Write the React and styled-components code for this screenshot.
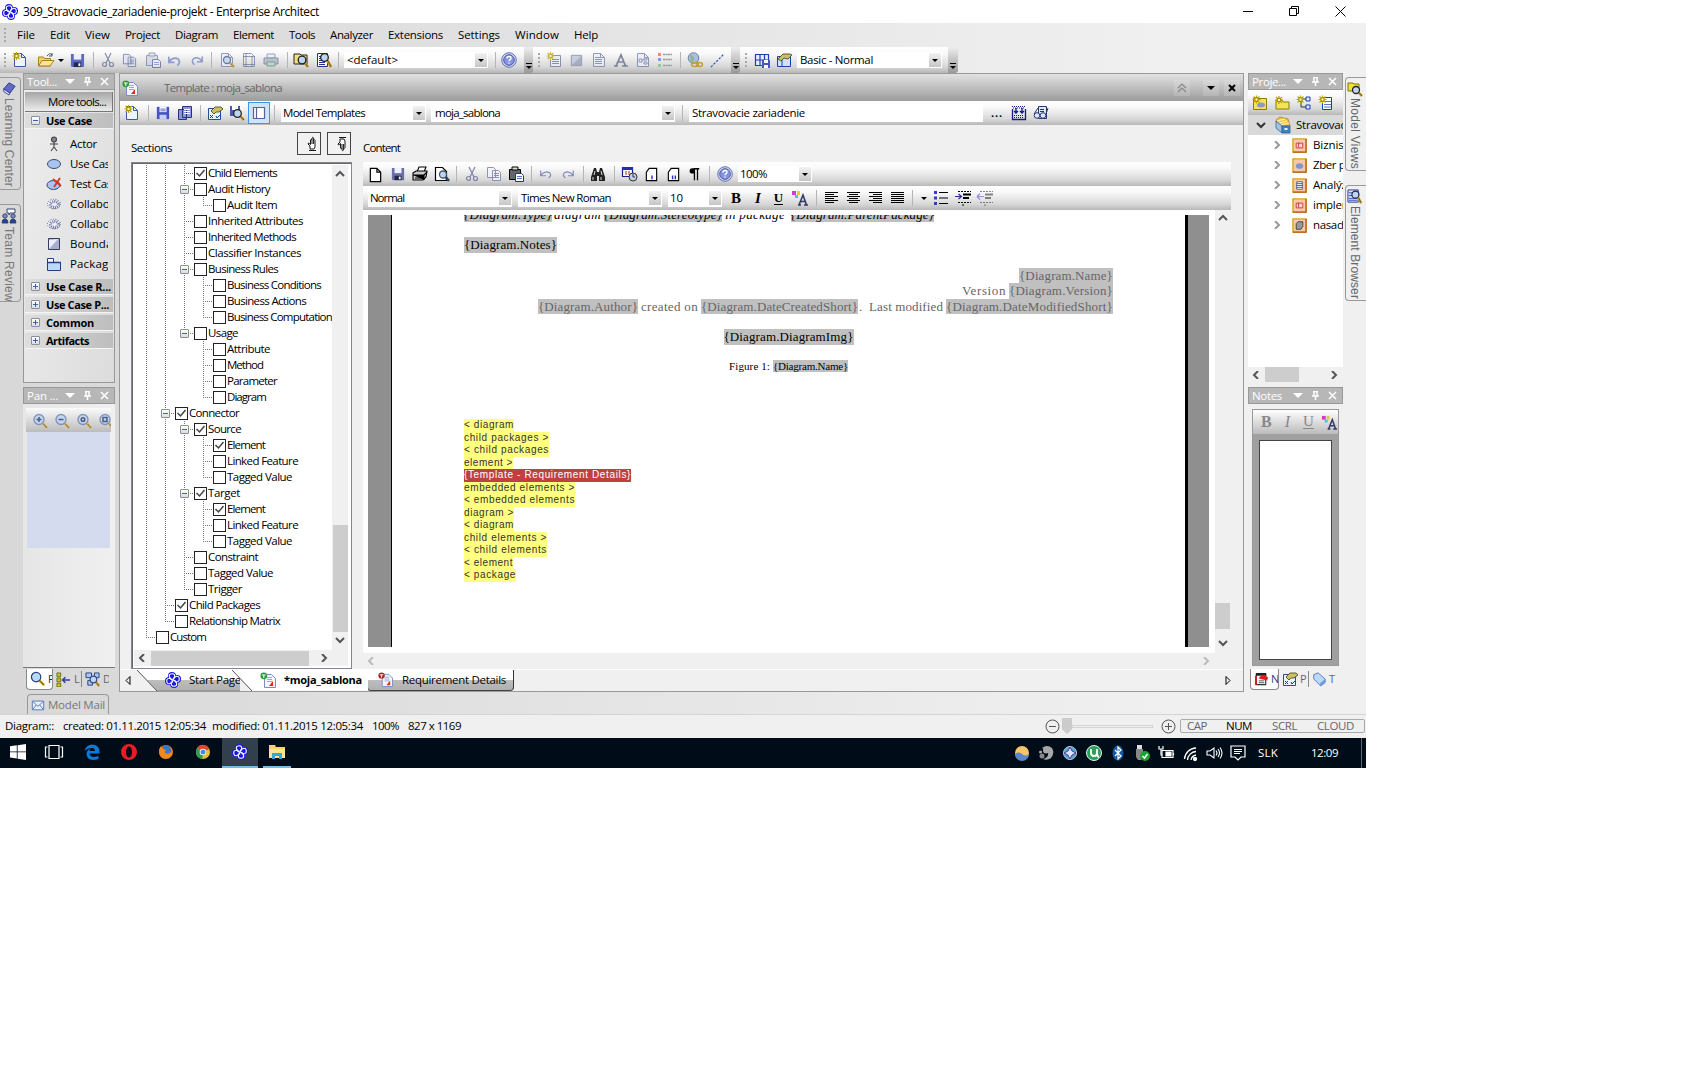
import React, { useLayoutEffect, useRef } from "react";
import styled, { createGlobalStyle, css } from "styled-components";

const UI = '"Open Sans", "Noto Sans", sans-serif';
const bar = "linear-gradient(180deg,#ffffff 0%,#f9f9f9 25%,#d8d8d8 75%,#b8b8b8 100%)";

const Global = createGlobalStyle`
  * { box-sizing: border-box; }
  html, body { margin: 0; background: #fff; }
  body { font: 12px/16px ${UI}; color: #000; overflow: hidden; }
  svg { display: block; flex: none; }
`;

/* ---------- text ---------- */
const Label = styled.span`
  flex: none;
  display: inline-block;
  white-space: pre;
  margin-left: ${(p) => p.$ml || 0}px;
  font-family: ${(p) => p.$font || UI};
  font-size: ${(p) => p.$size || (p.$bold ? 11 : 11.5)}px;
  font-weight: ${(p) => (p.$bold ? 700 : 400)};
  font-style: ${(p) => (p.$italic ? "italic" : "normal")};
  color: ${(p) => p.$color || "#000"};
  background: ${(p) => p.$bg || "none"};
  ${(p) => p.$vertical && css`writing-mode: vertical-rl; line-height: 14px;`}
`;

// Spreads the letters so that a label takes up exactly w pixels.
function Text({ w, children, ml, size, bold, italic, color, bg, font, vertical }) {
  const ref = useRef(null);
  useLayoutEffect(() => {
    if (!w) return;
    const el = ref.current;
    el.style.letterSpacing = "0px";
    const box = el.getBoundingClientRect();
    const natural = vertical ? box.height : box.width;
    el.style.letterSpacing = `${(w - natural) / children.length}px`;
  }, [w, children, vertical]);
  return (
    <Label ref={ref} $ml={ml} $size={size} $bold={bold} $italic={italic} $color={color} $bg={bg} $font={font} $vertical={vertical}>
      {children}
    </Label>
  );
}

/* ---------- icons ---------- */
const Star = ({ x = 5, y = 5 }) => (
  <g stroke="#c9a800" strokeWidth="1.2">
    <path d={`M${x - 4} ${y}h8M${x} ${y - 4}v8M${x - 3} ${y - 3}l6 6M${x + 3} ${y - 3}l-6 6`} />
    <circle cx={x} cy={y} r="1.8" fill="#fffbb0" stroke="#a89000" />
  </g>
);
const Lens = ({ x = 6, y = 6, r = 4, c = "#3b4d80", h = "#c79a2e" }) => (
  <g fill="none">
    <path d={`M${x + r * 0.7} ${y + r * 0.7}L15 15`} stroke={h} strokeWidth="2.6" />
    <path d={`M${x + r * 0.7 + 1} ${y + r * 0.7 + 1}L15 15`} stroke="#5d4a1c" strokeWidth=".8" />
    <circle cx={x} cy={y} r={r} fill="#bcd6f5" stroke={c} strokeWidth="1.3" />
  </g>
);
const Knot = () => (
  <g>
    <g fill="#1a18e8"><circle cx="7" cy="4" r="4" /><circle cx="12" cy="7" r="4" /><circle cx="9" cy="12" r="4" /><circle cx="4" cy="9" r="4" /></g>
    <g fill="none" stroke="#fff" strokeWidth="1.1">
      <path d="M9.500 6.500Q10.500 1.500 7 1.700 3.500 2 4.500 5T8 8" />
      <path d="M9.500 9.500Q14.500 10.500 14.300 7 14 3.500 11 4.500T8 8" />
      <path d="M6.500 9.500Q5.500 14.500 9 14.300 12.500 14 11.500 11T8 8" />
      <path d="M6.500 6.500Q1.500 5.500 1.700 9 2 12.500 5 11.500T8 8" />
    </g>
  </g>
);
const pageShape = (f, s) => <path d="M2.5 1.5h7l4 4v9h-11zM9.5 1.5v4h4" fill={f} stroke={s} />;
const lines = (ys, x1, x2, c) => <path d={ys.map((y) => `M${x1} ${y}H${x2}`).join("")} stroke={c} />;
const diskette = (c) => (
  <g><path d="M1 1h14v14H2l-1-1z" fill={c} /><path d="M4 1h8v6H4z" fill="#eef0fb" /><path d="M4 10h8v5H4z" fill="#23264f" /><path d="M9 11h2v3H9z" fill="#fff" /></g>
);
const scissors = (c) => (
  <g fill="none" stroke={c} strokeWidth="1.2"><path d="M5 1l5 10M11 1L6 11" /><circle cx="4.5" cy="12.5" r="2" /><circle cx="11.5" cy="12.5" r="2" /></g>
);
const copyShape = (c, f) => (
  <g stroke={c} fill={f}><path d="M1.5 1.5h6l2 2v8h-8zM6.5 4.5h6l2 2v8h-8z" />{lines([7.5, 9.5, 11.5], 8, 13, c)}</g>
);
const pasteShape = (b, f, c) => (
  <g><path d="M1.5 3.5h11v10h-11z" fill={b} stroke={c} /><path d="M4 1h6v3H4z" fill="#ddd" stroke={c} /><path d="M7.5 7.5h6l2 2v6h-8z" fill={f} stroke="#24348c" />{lines([10.5, 12.5], 9, 14, "#5d74c8")}</g>
);
const wiz = (
  <g><path d="M1.5 3.5h12v11h-12z" fill="#eaf2ff" stroke="#234c9a" /><path d="M4 6l4-4 6 0 2 2-4 3-3 0-2 2z" fill="#cdbf62" stroke="#3f3c14" strokeWidth=".8" /><path d="M3 10l3 3M6 10l-3 3M9 11l1 2 3-3" stroke="#17398e" fill="none" /></g>
);
const docBadge = (badge) => (
  <g><path d="M4.5 2.5h7l4 4v9h-11z" fill="#f4f6ff" stroke="#7d8ac8" />{lines([5.5, 7.5, 9.5], 7, 12, "#9aa6da")}<path d="M9 14l4-5v5z" fill="#e02a1c" /><circle cx="3.8" cy="3.8" r="3.4" fill={badge} /><path d="M2 3h3.6M3.8 3v3" stroke="#fff" /></g>
);
const zoomLens = (inner) => (
  <g opacity=".85"><Lens x={7} y={6.5} r={5} c="#6f87b5" h="#d8b04a" /><g stroke="#37466e" strokeWidth="1.5" fill="none">{inner}</g></g>
);
const folderPkg = (inner) => (
  <g><path d="M1 1h14v14H1z" fill="#f6c9a8" stroke="#d8a018" strokeWidth="1.4" /><path d="M15 1v14H1" fill="none" stroke="#b4581a" strokeWidth="1.3" />{inner}</g>
);
const alignLines = (ws) => <path d={ws.map(([a, b], i) => `M${a} ${2.5 + i * 2}H${b}`).join("")} stroke="#000" />;

const art = {
  knot: <Knot />,
  newdoc: <g>{pageShape("#eef3ff", "#3d59a0")}<Star x={4.5} y={4} /></g>,
  open: <g><path d="M.5 14V5h5l1 1.500h6V14z" fill="#f1cf6a" stroke="#a8821e" /><path d="M.5 14L4 8.500h12L12 14z" fill="#fbe39a" stroke="#a8821e" /><path d="M9 4q3-4 5-1m0-2v3h-3" fill="none" stroke="#456" /></g>,
  save: diskette("#5d68c4"),
  cut: <g opacity=".65">{scissors("#4a588c")}</g>,
  copy: <g opacity=".65">{copyShape("#4a588c", "#dfe4f6")}</g>,
  paste: <g opacity=".55">{pasteShape("#c9cfe4", "#eef", "#4a588c")}</g>,
  undo: <path d="M2 4v6h6M2 9.500q5-6 10-3 3 3-1 7" fill="none" stroke="#8f9ccb" strokeWidth="1.8" />,
  redo: <path d="M14 4v6H8M14 9.500q-5-6-10-3-3 3 1 7" fill="none" stroke="#8f9ccb" strokeWidth="1.8" />,
  preview: <g opacity=".7">{pageShape("#eef", "#67759f")}<Lens x={8} y={8} r={3.5} /></g>,
  page: <g opacity=".7" fill="none" stroke="#67759f"><path d="M2.500 1.500h8l3 3v10h-11zM5 1v14M11 4v11M2 4.500h12M2 12.500h12" /></g>,
  print: <g opacity=".75"><path d="M4 2h8v4H4z" fill="#e8eefb" stroke="#7b89a5" /><path d="M1 6h14v6H1z" fill="#a8b2c4" stroke="#6b7890" /><path d="M4 10h8v4H4z" fill="#9fe3b0" stroke="#6b7890" /></g>,
  find: <g><path d="M1 2h6l1 1h6v9H1z" fill="#f6df7a" stroke="#222" /><Lens x={9} y={8} r={3.800} c="#222" /></g>,
  find2: <g><path d="M1.500 1.500h10v13h-10z" fill="#fff" stroke="#24348c" />{lines([4.5, 6.5, 8.5, 10.5, 12.5], 3, 9, "#24348c")}<Lens x={8.500} y={5.500} r={3.800} c="#222" /></g>,
  help: <g><circle cx="8" cy="8" r="7.300" fill="#cfd6f2" stroke="#6476b4" /><circle cx="8" cy="8" r="5.300" fill="#8594dc" stroke="#4c5ea8" /><path d="M6 6.500q0-2 2-2t2 1.700q0 1-1.200 1.600-.8.400-.8 1.400M8 10.500v1.300" fill="none" stroke="#fff" strokeWidth="1.300" /></g>,
  newel: <g opacity=".75"><path d="M4.500 3.500h10v11h-10z" fill="#eef" stroke="#67759f" />{lines([7.5, 9.5, 11.5], 6, 13, "#67759f")}<Star x={4.500} y={4} /></g>,
  shade: <g opacity=".7"><path d="M2.500 2.500h11v11h-11z" fill="#bcc2d6" stroke="#67759f" /><path d="M3 13L13 3v10z" fill="#8f98b4" /></g>,
  doc: <g opacity=".7">{pageShape("#eef", "#67759f")}{lines([5.5, 7.5, 9.5, 11.5], 4, 11, "#67759f")}</g>,
  bigA: <path d="M1 14h4M9 14h6M3 14L8 3l4.500 11M5 10h5" fill="none" stroke="#7d8398" strokeWidth="1.700" />,
  docT: <g opacity=".7">{pageShape("#eef", "#67759f")}<path d="M4 7h3v3H4zM9 6h3v2H9zM9 10h3v2H9zM7 8h2" fill="none" stroke="#67759f" /></g>,
  legend: <g><path d="M1 1h3v3H1z" fill="#f08a7a" /><path d="M1 6h3v3H1z" fill="#7d9be8" /><path d="M1 12h3v3H1z" fill="#8ecf8e" /><path d="M6 2.500h9M6 7.500h9M6 13.500h9" stroke="#999" strokeWidth="1.500" strokeDasharray="2 .5" /></g>,
  globe: <g><circle cx="6.500" cy="6" r="5.300" fill="#a9bfdc" stroke="#6d86a8" /><path d="M3 3q3 0 4 3t-3 4" fill="#8db48c" /><ellipse cx="8" cy="12.500" rx="3.500" ry="2" fill="none" stroke="#c79a3e" strokeWidth="1.500" /><ellipse cx="12.500" cy="12.500" rx="3" ry="2" fill="none" stroke="#c79a3e" strokeWidth="1.500" /></g>,
  dash: <path d="M1 15L15 1" stroke="#3c57b4" strokeWidth="1.300" strokeDasharray="2.500 1.500" />,
  gridSave: <g><path d="M1.500 2.500h13v11h-13zM6 2v11M10.500 2v6M1 8h13" fill="#e5f0ff" stroke="#1c3fae" strokeWidth="1.200" /><path d="M8 8h8v8H8z" fill="#4a55b8" /><path d="M10 8h4v3h-4zM10 13h4v3h-4z" fill="#fff" /></g>,
  gridHand: <g><path d="M1.500 4.500h13v10h-13zM6 4v10" fill="#cfe2fb" stroke="#1c3fae" /><path d="M2 7l5-5h7l2 1-4 4-4-1-3 3z" fill="#cdbf62" stroke="#3f3c14" strokeWidth=".8" /></g>,
  tplSaveAll: <g><path d="M1.500 4.500h8v10h-8zM5.500 1.500h9v11h-9z" fill="#8c96dc" stroke="#27337e" />{lines([4.5, 6.5, 8.5], 7, 13, "#fff")}</g>,
  tplSave: <g><path d="M1 1h14v14H1z" fill="#4453c0" /><path d="M4 1h8v6H4z" fill="#fff" />{lines([3.5, 5.5], 5, 11, "#4453c0")}<path d="M4 10h8v5H4z" fill="#c7cdf4" /></g>,
  wiz,
  diskLens: <g><path d="M1 1h10v10H1z" fill="#4858b4" /><path d="M3 1h6v4H3z" fill="#fff" /><Lens x={8.500} y={8.500} r={3.800} c="#222" /></g>,
  layout: <path d="M2.500 2.500h11v11h-11zM5.500 2v12" fill="#fff" stroke="#5a5f9c" strokeWidth="1.200" />,
  generate: <g fill="none" stroke="#121a8c"><path d="M1.500 4v10.500h13V4" strokeWidth="1.300" /><path d="M5 3v5m-2-2l2 2 2-2M11 3v5m-2-2l2 2 2-2" strokeWidth="1.400" /><path d="M3 10.500h10M3 12.500h10" strokeDasharray="1 1" /><path d="M1 1.500h14M2 3h12" strokeDasharray="1 1" /></g>,
  glasses: <g fill="#dfe6fb" stroke="#26366f"><path d="M5.500 1.500h8v12h-8z" />{lines([4.5, 6.5], 7, 11, "#26366f")}<circle cx="4" cy="10.500" r="2.800" /><circle cx="10" cy="10.500" r="2.800" /><path d="M1 9l4-6M13 9l2-6" fill="none" /></g>,
  handUp: <path d="M6 13V10L4 8l.5-1L6.500 8.500V4q.7-1.500 1.500 0V2q.8-1.500 1.600 0v2q.8-1 1.400.3V11l-1 2zM5 14.500h7M8 4v4M9.600 4v4" fill="#fff" stroke="#000" strokeWidth=".9" />,
  handDown: <path d="M5 1.500h7M6 3v3L4 8l.5 1 2-1.500V12q.7 1.500 1.500 0v2q.8 1.500 1.600 0v-2q.8 1 1.400-.3V5l-1-2zM8 12V8M9.600 12V8" fill="#fff" stroke="#000" strokeWidth=".9" />,
  blank: <path d="M2.500 1.500h7l4 4v10h-11zM9.500 1.500v4h4" fill="#fff" stroke="#000" strokeWidth="1.300" />,
  save2: diskette("#6a6fa8"),
  print2: <g stroke="#000" strokeWidth="1.100"><path d="M5 6l2-5h7l-2 5" fill="#fff" /><path d="M1 7l3-2h11l-1 6-3 3H1z" fill="#c9c9c9" /><path d="M1 9h11v5M12 9l3-3M3 12h6" /></g>,
  prev2: <g><path d="M1.500 1.500h7l4 4v9h-11z" fill="#fff" stroke="#000" strokeWidth="1.200" /><Lens x={9} y={8.500} r={3.500} c="#456" h="#223a6a" /></g>,
  cut2: scissors("#7d83a8"),
  copy2: <g opacity=".85">{copyShape("#7d83a8", "#f3f4fb")}</g>,
  paste2: pasteShape("#66666a", "#fff", "#000"),
  undo2: <path d="M2 4v6h6M2 9.500q5-6 10-3 3 3-1 6" fill="none" stroke="#8087bd" strokeWidth="1.300" />,
  redo2: <path d="M14 4v6H8M14 9.500q-5-6-10-3-3 3 1 6" fill="none" stroke="#8087bd" strokeWidth="1.300" />,
  binoc: <g fill="#222"><path d="M4 2h2l1 4v9H1v-4zM10 2h2l3 9v4H9V6z" /><path d="M6 6h4v4H6z" /><path d="M3 11v3M11 11v3M5 5l-1 4M11 5l1 4" stroke="#ddd" /></g>,
  cal: <g><path d="M.5 1.500h10v9H.5z" fill="#fff" stroke="#1c1c8c" strokeWidth="1.200" /><path d="M0 1h11v3H0z" fill="#2a2ab0" /><path d="M4 5v4M7 5v4" stroke="#b02020" /><circle cx="11" cy="11" r="4" fill="#bcd2ea" stroke="#333" /><path d="M11 8v3h2" fill="none" stroke="#333" /></g>,
  page1: <g><path d="M5.500 1.500h8v13h-11v-9z" fill="#fff" stroke="#000" strokeWidth="1.200" /><path d="M8.500 9v4" stroke="#2a2ad8" strokeWidth="1.500" /></g>,
  page2: <g><path d="M5.500 1.500h8v13h-11v-9z" fill="#fff" stroke="#000" strokeWidth="1.200" /><path d="M7 9v4M10 9v4" stroke="#2a2ad8" strokeWidth="1.500" /></g>,
  para: <g><path d="M8 2h6M8.500 2v13M12 2v13" stroke="#000" strokeWidth="1.500" /><path d="M8.500 1.500H6q-3 0-3 3t3 3h2.500z" fill="#000" /></g>,
  fontA: <g><path d="M0 1h4v4H0z" fill="#d23cc8" /><path d="M5 1h3v4H5z" fill="#e8c83c" /><path d="M3 5h3v3H3z" fill="#3cc8d8" /><path d="M6 15h3M12 15h4M7 15l4-10 3.500 10M8.500 11.500h5" fill="none" stroke="#333c66" strokeWidth="1.600" /></g>,
  alL: alignLines([[2, 15], [2, 11], [2, 15], [2, 11], [2, 15], [2, 11]]),
  alC: alignLines([[2, 15], [4, 13], [2, 15], [4, 13], [2, 15], [4, 13]]),
  alR: alignLines([[2, 15], [6, 15], [2, 15], [6, 15], [2, 15], [6, 15]]),
  alJ: alignLines([[2, 15], [2, 15], [2, 15], [2, 15], [2, 15], [2, 15]]),
  bullets: <g><path d="M1 1h3v3H1zM1 6.500h3v3H1zM1 12h3v3H1z" fill="#3a3ac0" /><path d="M6 2.500h9M6 8h9M6 13.500h9" stroke="#000" /></g>,
  indent: <g><path d="M3 1.500h13M3 12.500h13M7 15h3" stroke="#000" strokeDasharray="2 1" /><path d="M8 4.500h8M8 8h6" stroke="#000" strokeWidth="2" /><path d="M0 6.500h6M3.500 4l3 2.500-3 2.500" fill="none" stroke="#2a2a9c" strokeWidth="1.200" /></g>,
  outdent: <g opacity=".45"><path d="M3 1.500h13M3 12.500h13M7 15h3" stroke="#000" strokeDasharray="2 1" /><path d="M8 4.500h8M8 8h6" stroke="#000" strokeWidth="2" /><path d="M0 6.500h7M0 6.500l3-3M0 6.500l3 3" stroke="#2a2a9c" strokeWidth="1.200" fill="none" /></g>,
  actor: <g fill="none" stroke="#444" strokeWidth="1.100"><circle cx="8" cy="3.500" r="2.500" fill="#7d8699" /><path d="M8 6v5M4 8h8M8 11l-3 4M8 11l3 4" /></g>,
  usecase: <ellipse cx="8" cy="8" rx="6.500" ry="4.500" fill="#a9c4ee" stroke="#3b4a70" />,
  testcase: <g><ellipse cx="7.500" cy="9" rx="6.500" ry="4.500" fill="#a9c4ee" stroke="#3b4a70" /><path d="M7 3l8 7M14 2L8 11" stroke="#e03020" strokeWidth="1.800" /></g>,
  collab: <g><ellipse cx="8" cy="8" rx="6.500" ry="4.800" fill="#eef" stroke="#555d75" strokeDasharray="1 1.500" /><ellipse cx="8.500" cy="8.500" rx="4" ry="3" fill="none" stroke="#6d7590" strokeWidth="3" strokeDasharray="1 1" /></g>,
  boundary: <g><path d="M2.500 2.500h11v11h-11z" fill="#a9afc9" stroke="#333b66" /><path d="M3 13V4l9-1z" fill="#edf0fa" /></g>,
  pkg: <g><path d="M1.500 6.500h13v8h-13z" fill="#bcd9fb" stroke="#24407c" /><path d="M1.500 2.500h6v4h-6z" fill="#fff" stroke="#24407c" /><path d="M1 6.500h14" stroke="#24407c" strokeWidth="1.500" /></g>,
  zin: zoomLens(<path d="M4.500 6.500h5M7 4v5" />),
  zout: zoomLens(<path d="M4.500 6.500h5" />),
  zfit: zoomLens(<circle cx="7" cy="6.500" r="1.800" />),
  zwin: zoomLens(<path d="M5 4.500h4v4H5z" />),
  lens: <Lens x={6.500} y={6.500} r={5} c="#24407c" />,
  tree: <g><path d="M1 1h4v4H1zM1 6.500h4v4H1zM1 12h4v4H1z" fill="#c8c81c" stroke="#555500" strokeWidth=".8" /><path d="M7 8.500h8M10 5.500l-3 3 3 3" fill="none" stroke="#3a3a9c" strokeWidth="1.600" /></g>,
  diagLens: <g><path d="M1 1h6v5H1zM10 1h5v5h-5zM3 9h5v5H3z" fill="#a9c8f4" stroke="#24407c" /><Lens x={9} y={8} r={3.500} /></g>,
  mail: <g><path d="M1.500 3.500h13v10h-13z" fill="#e8f0fc" stroke="#4a70b4" /><path d="M2 4l6 5.500L14 4M2 13l4-5M14 13l-4-5" fill="none" stroke="#4a70b4" /></g>,
  book: <g><path d="M2 9l6-7 7 4-6 8z" fill="#6169c9" stroke="#2c327f" /><path d="M2 9l7 5-1 2-6-4z" fill="#e8eaf8" stroke="#2c327f" /></g>,
  team: <g fill="#7d8fc0" stroke="#39456e"><path d="M6 1h8v4H9L8 7V5H6z" fill="#fff" /><circle cx="4" cy="8" r="2.200" /><circle cx="12" cy="8" r="2.200" /><path d="M1 15q0-4 3-4t3 4zM9 15q0-4 3-4t3 4z" fill="#1f3f9c" /></g>,
  folderLens: <g><path d="M1 2h5l1 1h5v7H1z" fill="#f1e23a" stroke="#7d7400" /><Lens x={9} y={9} r={3.500} c="#222" /></g>,
  listLens: <g><path d="M1 1h11v13H1z" fill="#dfe6fb" stroke="#24348c" />{lines([4, 7, 10, 12], 2, 11, "#2a50c0")}<Lens x={9} y={6} r={3.800} c="#224" /></g>,
  prNew: <g><path d="M1.500 3.500h13v11h-13z" fill="#f3e45a" stroke="#8c7c00" /><ellipse cx="9" cy="10" rx="4" ry="2.500" fill="#8f9ac4" /><Star x={4.500} y={4.500} /></g>,
  prFolder: <g><path d="M2 5h6l1 2h6v7H2z" fill="#f3e45a" stroke="#8c7c00" /><Star x={5} y={5} /></g>,
  prDiag: <g><path d="M10 2h4v4h-4zM10 10h4v4h-4z" fill="#dfe9fb" stroke="#1c3fae" /><path d="M5 6v6h5M7 4h3" fill="none" stroke="#333" /><Star x={4.500} y={4.500} /></g>,
  prEl: <g><path d="M4.500 2.500h9v12h-9z" fill="#fff" stroke="#1c3fae" />{lines([6.5, 9.5, 12], 6, 13, "#5a74c8")}<Star x={4.500} y={4.500} /></g>,
  cabinet: <g><path d="M1 3l4-3 8 2 2 7H3z" fill="#f5c24a" stroke="#a8821e" strokeWidth=".8" /><path d="M2 4l8-2M4 6l8-2M5 8l9-2" stroke="#fff5c8" strokeWidth="1.200" /><path d="M1 4l6 5v7l-6-5z" fill="#9cc6e8" stroke="#2d6496" strokeWidth=".8" /><path d="M7 9h8v7H7z" fill="#3f83bd" stroke="#2d6496" strokeWidth=".8" /><path d="M9.500 11h3v2h-3z" fill="#e8f2fb" /></g>,
  pBox: folderPkg(<path d="M4.500 5.500h7v5h-7zM7 5v5" fill="#fbd4d4" stroke="#c04040" />),
  pOval: folderPkg(<ellipse cx="8" cy="8.500" rx="4" ry="3" fill="#8595cc" />),
  pList: folderPkg(<g><path d="M5 4h6v8H5z" fill="#fff" stroke="#46648c" />{lines([6, 8, 10], 5, 11, "#46648c")}</g>),
  pCube: folderPkg(<path d="M4.500 6l2-2h5v5l-2 3h-5z" fill="#999" stroke="#444" />),
  noteRed: <g><path d="M2.500 3.500h10v11h-10z" fill="#fff" stroke="#333" strokeWidth="1.200" /><path d="M2 2h11v3H2z" fill="#222" /><path d="M5 8q4-7 10-1l-1 3z" fill="#e01c1c" /><path d="M2 5v10" stroke="#e01c1c" strokeWidth="2" />{lines([10.5, 12.5], 5, 11, "#555")}</g>,
  tag: <g><path d="M2 3l5-2 8 7v4l-5 4-8-8z" fill="#bcd9fb" stroke="#4a70b4" /><path d="M9 13l6-5v4l-5 4z" fill="#6d9be0" /></g>,
  docGreen: docBadge("#2f9c3c"),
  docRed: docBadge("#b02828"),
  windows: <path d="M0 2.300l6.800-1v6.200H0zM7.600 1.200L16 0v7.500H7.600zM0 8.300h6.800v6.200L0 13.600zM7.600 8.300H16V16l-8.400-1.200z" fill="#fff" />,
  taskview: <path d="M3 1.500h10v13H3zM1.500 3H-.5v10h2M14.500 3h2v10h-2" fill="none" stroke="#fff" strokeWidth="1.200" />,
  edge: <path d="M.5 7Q2 .5 8.500.5 15.500 1 15.500 8v1.500H5.500q.5 3.500 4.500 3.500 2.500 0 4.500-1.200v3Q12 16 9 16 2.500 15.500 2.500 9.500 3 6 6.500 4.500 5.500 5.500 5.500 7h5.500q0-3-3-3Q3.500 4 .5 7z" fill="#0a7bdc" />,
  opera: <path fillRule="evenodd" d="M8 0a8 8 0 100 16A8 8 0 008 0zm0 2.500c2 0 3 2.500 3 5.500s-1 5.500-3 5.500S5 11 5 8s1-5.500 3-5.500z" fill="#e81c24" />,
  firefox: <g><circle cx="8" cy="8" r="7" fill="#f0801c" /><path d="M4 3Q8-1 12 3q2 3 1 6-3 3-6 0-1-2 1-3L5 5z" fill="#3a76c4" /><path d="M1 6q1-3 2-4l2 3 3 1q-2 1-1 3 3 2 6-1 1 3-1 5-5 3-9 0Q1 10 1 6z" fill="#f08a1c" /></g>,
  chrome: <g><circle cx="8" cy="8" r="7" fill="#e8c030" /><path d="M8 8L2 4.300A7 7 0 0114.400 5z" fill="#dc4636" /><path d="M8 8L2 4.300A7 7 0 007.500 15z" fill="#2f9c58" /><circle cx="8" cy="8" r="3.300" fill="#fff" /><circle cx="8" cy="8" r="2.500" fill="#4a88dc" /></g>,
  explorer: <g><path d="M0 1h6l1 2h9v11H0z" fill="#f7d36e" /><path d="M0 5h16v9H0z" fill="#fbe49a" /><path d="M3 9h10v6h-3v-3H6v3H3z" fill="#33a7dc" /></g>,
  tWeather: <g><circle cx="8" cy="8" r="7" fill="#f5c56a" /><path d="M1 9q4-3 7 0t7 0A7 7 0 011 9z" fill="#5d86c8" /></g>,
  tSteel: <g fill="#a8a8a8"><path d="M4 3q5-4 10 0 3 5-1 10-4 3-8 1 4-1 5-4t-3-5z" /><circle cx="8" cy="5.500" r="3" /><circle cx="2.500" cy="7" r="1.500" /><circle cx="4" cy="11" r="2.500" fill="#888" /></g>,
  tCompass: <g><circle cx="8" cy="8" r="6.500" fill="#5aa0cc" stroke="#a8d4ec" /><path d="M8 2l2 4 4 2-4 2-2 4-2-4-4-2 4-2z" fill="#dfe3ff" stroke="#503c9c" /></g>,
  tTorrent: <g><circle cx="8" cy="8" r="7.500" fill="#2fa05c" stroke="#dff5e6" /><path d="M5 4v4q0 3 3 3t3-3V4M11 8q0 4 2 4" fill="none" stroke="#fff" strokeWidth="1.800" /></g>,
  tBlue: <g><ellipse cx="8" cy="8" rx="5.500" ry="7.500" fill="#0f58a8" /><path d="M5 5l6 6-3 3V2l3 3-6 6" fill="none" stroke="#fff" strokeWidth="1.200" /></g>,
  tUsb: <g><path d="M3 0h5v4H3z" fill="#ddd" /><path d="M2 4h7v8l-2 3H4l-2-3z" fill="#888" /><circle cx="11" cy="11" r="5" fill="#1fa032" /><path d="M8.500 11l2 2 3-4" fill="none" stroke="#fff" strokeWidth="1.500" /></g>,
  tPower: <g fill="none" stroke="#fff" strokeWidth="1.200"><path d="M4 5.500h11v7H4zM15.500 8v2" /><path d="M8 7h5v4H8z" fill="#fff" /><path d="M1 1v3h4V1M3 4v6h1" /></g>,
  tWifi: <g fill="none" stroke="#fff" strokeWidth="1.300"><path d="M9 15a6 6 0 015-5M5.500 15A9 9 0 0114 6.500M2.500 14A12 12 0 0114 3" /><circle cx="13" cy="14" r="1.500" fill="#fff" /></g>,
  tSound: <path d="M1 6h3l4-3v10l-4-3H1zM10 5.500q2 2.500 0 5M12 4q3 4 0 8M14 2.500q4 5.500 0 11" fill="none" stroke="#fff" strokeWidth="1.100" />,
  tNote: <path d="M1 1h14v11h-4l-3 3-3-3H1zM4 4.500h8M4 6.500h8M4 8.500h6" fill="none" stroke="#fff" strokeWidth="1.200" />,
};

const Glyph = styled.svg`
  width: ${(p) => p.$s}px;
  height: ${(p) => p.$s}px;
  margin-left: ${(p) => p.$ml}px;
  overflow: visible;
`;
const Icon = ({ n, ml = 0, s = 16 }) => <Glyph viewBox="0 0 16 16" $s={s} $ml={ml}>{art[n]}</Glyph>;
const Stroke = styled.svg`
  width: ${(p) => p.$w}px;
  height: ${(p) => p.$h}px;
  margin-left: ${(p) => p.$ml || 0}px;
  fill: none;
  stroke: ${(p) => p.$c || "#555"};
  stroke-width: ${(p) => p.$sw || 2};
`;
const chev = { up: "M1 6l4-4 4 4", down: "M1 2l4 4 4-4", left: "M6 0L2 4l4 4", right: "M2 0l4 4-4 4" };
const Chevron = ({ d, c, ml }) => (
  <Stroke viewBox={d === "up" || d === "down" ? "0 0 10 8" : "0 0 8 8"} $w={d === "up" || d === "down" ? 10 : 8} $h={8} $c={c} $ml={ml}><path d={chev[d]} /></Stroke>
);
const Tri = styled.i`
  flex: none;
  margin-left: ${(p) => p.$ml || 0}px;
  border: ${(p) => p.$s || 3}px solid transparent;
  border-top-color: ${(p) => p.$c || "#000"};
  border-bottom-width: 0;
`;

/* ---------- shared parts ---------- */
const Row = styled.div`display: flex; align-items: center; flex: none; height: ${(p) => p.$h || "auto"}${(p) => (p.$h ? "px" : "")}; padding-left: ${(p) => p.$pl || 0}px;`;
const Heading = styled.div`padding-top: 8px;`;
const Sep = styled.i`flex: none; width: 1px; height: 16px; background: #b5b5b5; margin-left: ${(p) => p.$ml}px;`;
const Grip = styled.i`flex: none; width: 2px; height: 15px; margin-left: ${(p) => p.$ml}px; background: repeating-linear-gradient(180deg,#aaa 0 2px,transparent 2px 4px);`;
const Combo = styled.div`
  display: flex; align-items: center; justify-content: space-between; flex: none;
  width: ${(p) => p.$w}px; height: ${(p) => p.$h || 16}px; margin-left: ${(p) => p.$ml || 0}px;
  padding-left: ${(p) => p.$pl ?? 3}px; background: #fff;
`;
const Drop = styled.span`
  display: flex; align-items: center; justify-content: center; flex: none;
  width: 12px; height: 14px; margin-right: 1px; background: linear-gradient(180deg,#f2f2f2,#c6c6c6);
`;
const Select = ({ w, ml, text, tw, pl, h }) => (
  <Combo $w={w} $ml={ml} $pl={pl} $h={h}><Text w={tw}>{text}</Text><Drop><Tri /></Drop></Combo>
);
const Overflow = styled.span`
  display: flex; flex-direction: column; align-items: center; justify-content: flex-end; gap: 2px; flex: none;
  width: 10px; height: 26px; padding-bottom: 4px; margin-left: ${(p) => p.$ml}px;
  background: linear-gradient(180deg,#eee,#999); border-radius: 0 3px 3px 0;
  &::before { content: ""; width: 6px; height: 1px; background: #000; }
`;
const Underline = styled.span`display: flex; line-height: 13px; margin-left: 13px; border-bottom: 1px solid ${(p) => p.$c || "#000"};`;

/* ---------- window ---------- */
const Screen = styled.div`width: 1366px; height: 768px; display: flex; flex-direction: column; overflow: hidden; background: linear-gradient(90deg,#d8d8d8 0,#dadada 10%,#f0f0f0 85%);`;
const TitleBar = styled.div`display: flex; align-items: center; height: 23px; flex: none; background: #fff; padding-left: 2px;`;
const WinButtons = styled.div`display: flex; gap: 35px; margin-left: auto; margin-right: 20px; svg { fill: none; stroke: #000; width: 11px; height: 11px; overflow: visible; }`;
const MenuBar = styled.div`display: flex; align-items: center; gap: 15px; height: 24px; flex: none; padding-left: 4px;`;
const ToolRow = styled.div`display: flex; height: 26px; flex: none;`;
const ToolBar = styled.div`display: flex; align-items: center; width: ${(p) => p.$w}px; height: 26px; background: ${bar}; border-radius: 0 4px 4px 0;`;
const Work = styled.div`display: flex; height: 641px; flex: none;`;
const Rail = styled.div`width: ${(p) => p.$w}px; flex: none; display: flex; flex-direction: column; padding-top: 4px;`;
const RailTab = styled.div`
  display: flex; flex-direction: column; align-items: center; gap: ${(p) => p.$gap || 3}px;
  width: 21px; height: ${(p) => p.$h}px; margin-top: ${(p) => p.$mt || 0}px; padding: 3px 3px 0 1px;
  border: 1px solid #999; ${(p) => (p.$right ? "border-right: 0; border-radius: 4px 0 0 4px; padding-left:0;" : "border-left: 0; border-radius: 0 4px 4px 0;")}
`;
const SideCol = styled.div`width: ${(p) => p.$w}px; flex: none; display: flex; flex-direction: column; margin-right: ${(p) => p.$mr}px;`;
const Caption = styled.div`
  display: flex; align-items: center; flex: none; height: 17px; padding-left: 3px;
  background: #b7b7b7; border: 1px solid #999;
`;
const CaptionButtons = styled.span`display: flex; align-items: center; gap: 8px; margin-left: auto; padding-right: 5px; svg { width: 9px; height: 9px; fill: none; stroke: #fff; stroke-width: 1.5; }`;
const PanelCaption = ({ text, w }) => (
  <Caption>
    <Text w={w} color="#fff">{text}</Text>
    <CaptionButtons>
      <Tri $s={5} $c="#fff" />
      <svg viewBox="0 0 9 9"><path d="M2 .5h5M3 0v5M6 0v5M1 5h7M4.500 5v4" /></svg>
      <svg viewBox="0 0 9 9"><path d="M1 1l7 7M8 1L1 8" /></svg>
    </CaptionButtons>
  </Caption>
);

/* ---------- toolbox ---------- */
const ToolboxBody = styled.div`height: 293px; flex: none; padding: 2px 1px 0; overflow: hidden; background: linear-gradient(100deg,#ededed,#dcdcdc); border: solid #999; border-width: 0 1px 1px;`;
const MoreTools = styled.div`display: flex; align-items: center; justify-content: flex-end; height: 20px; padding-right: 6px; background: linear-gradient(180deg,#a6a6a6,#ececec); border: solid #777; border-width: 0 1px 1px 0;`;
const GroupHead = styled.div`display: flex; align-items: center; gap: 6px; height: 15px; margin-top: ${(p) => p.$mt}px; padding-left: 6px; background: linear-gradient(90deg,#dedede,#bdbdbd); box-shadow: 0 1px #f4f4f4;`;
const Box9 = styled.i`
  flex: none; width: 9px; height: 9px; border: 1px solid #8a8f99; border-radius: 1px;
  background: linear-gradient(#3c62b8,#3c62b8) center/5px 1px no-repeat ${(p) => (p.$plus ? ", linear-gradient(#3c62b8,#3c62b8) center/1px 5px no-repeat" : "")}, linear-gradient(#fff,#ddd);
`;
const ToolItem = styled.div`display: flex; align-items: center; gap: 8px; height: 20px; width: 83px; padding-left: 21px; overflow: hidden;`;

const PanBody = styled.div`height: 264px; flex: none; padding: 4px 4px 0 3px; background: linear-gradient(90deg,#e6e6e6,#f0f0f0); border-bottom: 1px solid #777;`;
const PanBar = styled.div`display: flex; align-items: center; height: 24px; padding: 2px 0 0 6px; gap: 6px; overflow: hidden; background: linear-gradient(180deg,#fafafa,#bcbcbc);`;
const PanView = styled.div`height: 116px; margin: 0 1px; background: #d5dbee;`;
const BottomTabs = styled.div`display: flex; align-items: center; height: 22px; flex: none; padding-left: ${(p) => p.$pl}px;`;
const SmallTab = styled.div`
  display: flex; align-items: center; height: 21px; width: ${(p) => p.$w}px; padding-left: 3px; gap: 1px; overflow: hidden;
  ${(p) => p.$on && "background:#fff;border:1px solid #888;border-top:0;border-radius:0 0 4px 4px;"}
  ${(p) => p.$line && "border-right:1px solid #888;height:16px;"}
`;
const MailTab = styled.div`display: flex; align-items: center; gap: 3px; width: 82px; height: 20px; margin: 4px 0 0 4px; padding-left: 3px; border: 1px solid #999; border-bottom: 0; border-radius: 4px 4px 0 0;`;

/* ---------- document ---------- */
const DocWindow = styled.div`width: 1125px; height: 619px; flex: none; display: flex; flex-direction: column; margin-right: 4px; background: #f0f0f0; border: 1px solid #999;`;
const DocHead = styled.div`display: flex; align-items: center; height: 27px; flex: none; padding-left: 2px; background: linear-gradient(180deg,#e2e2e2,#9c9c9c);`;
const HeadButton = styled.span`display: flex; align-items: center; justify-content: center; width: 16px; height: 16px; background: rgba(255,255,255,.15); margin-left: ${(p) => p.$ml}px;`;
const DocBar = styled.div`display: flex; align-items: center; height: 24px; flex: none; background: ${bar};`;
const Toggled = styled.span`display: flex; align-items: center; justify-content: center; width: 22px; height: 22px; margin-left: 3px; border: 1px solid #3c96e8; background: #cfe4f8;`;
const Columns = styled.div`display: flex; height: 544px; flex: none;`;
const SectionsCol = styled.div`width: 221px; margin-left: 11px; display: flex; flex-direction: column; flex: none;`;
const HandButton = styled.span`display: flex; align-items: center; justify-content: center; width: 24px; height: 23px; padding-left: 6px; margin-left: ${(p) => p.$ml}px; border: 1px solid #444; background: #f2f2f2;`;
const TreeBox = styled.div`display: grid; grid-template: 485px 16px / 198px 16px; height: 507px; background: #fff; border: 1px solid #83878f; box-shadow: inset 1px 1px #666; padding: 2px;`;
const TreeList = styled.div`padding-left: 3px; overflow: hidden;`;
const TreeRow = styled.div`display: flex; align-items: center; height: 16px;`;
const dotsV = "repeating-linear-gradient(180deg,#777 0 1px,transparent 1px 2px)";
const dotsH = "repeating-linear-gradient(90deg,#777 0 1px,transparent 1px 2px)";
const Guide = styled.span`
  display: flex; align-items: center; flex: none; width: 19px; height: 16px; padding-left: 5px;
  background: ${(p) => [p.$v && `${dotsV} 9px 0/1px ${p.$v}px no-repeat`, p.$branch && `${dotsH} 9px 8px/10px 1px no-repeat`].filter(Boolean).join(",") || "none"};
`;
const Check = styled.span`display: flex; align-items: center; justify-content: center; flex: none; width: 13px; height: 13px; margin-right: 1px; border: 1px solid #222; background: #fff;`;
const VScroll = styled.div`display: flex; flex-direction: column; align-items: center; width: 16px; background: #f0f0f0; padding: ${(p) => p.$pad || "5px 0"};`;
const HScroll = styled.div`display: flex; align-items: center; height: ${(p) => p.$h || 16}px; flex: none; background: #f0f0f0; padding: 0 5px 0 4px; grid-column: ${(p) => (p.$wide ? "1 / 3" : "auto")};`;
const Thumb = styled.i`flex: none; background: #cdcdcd; width: ${(p) => p.$w}px; height: ${(p) => p.$h}px; margin: ${(p) => p.$m || 0};`;
const Grow = styled.i`flex: 1;`;

const ContentCol = styled.div`width: 868px; margin-left: 11px; display: flex; flex-direction: column; flex: none;`;
const Editor = styled.div`display: flex; height: 443px; flex: none;`;
const Canvas = styled.div`width: 852px; padding: 5px 0 6px 5px; background: #fff; display: flex;`;
const Gutter = styled.div`width: ${(p) => p.$w}px; background: #8f8f8f; border: solid #000; border-width: 0 ${(p) => p.$r || 0}px 0 ${(p) => p.$l || 0}px;`;
const Page = styled.div`width: 793px; padding: 0 72px; overflow: hidden; background: #fff;`;
const DocLine = styled.div`
  display: flex; height: ${(p) => p.$h}px; margin-top: ${(p) => p.$mt || 0}px;
  justify-content: ${(p) => p.$at || "flex-start"};
  line-height: ${(p) => p.$h}px;
`;
const Tags = styled.div`display: flex; flex-direction: column; align-items: flex-start; margin-top: 47px; line-height: 12.5px;`;
const serif = '"Liberation Serif", serif';
const sans = '"Liberation Sans", sans-serif';

const DocTabs = styled.div`display: flex; align-items: center; height: 21px; flex: none; border-top: 1px solid #fff;`;
const DocTab = styled.div`
  display: flex; align-items: center; height: 21px; width: ${(p) => p.$w}px; margin-left: ${(p) => p.$ml}px; padding-left: ${(p) => p.$pl}px; flex: none;
  background: ${(p) => (p.$on ? "#fff" : "linear-gradient(180deg,#fff 0 48%,#bdbdbd 52%,#b0b0b0)")};
  ${(p) => !p.$on && "border-bottom: 1px solid #444;"}
  ${(p) => p.$slant && `clip-path: polygon(0 0,100% 0,100% 100%,20px 100%);`}
  ${(p) => p.$edge && "border-right: 1px solid #333; border-left: 1px solid #333; border-radius: 0 0 4px 4px;"}
`;
const SlantLine = styled.svg`width: 20px; height: 21px; margin-right: -20px; margin-left: ${(p) => p.$ml}px; stroke: #555; fill: none; z-index: 1;`;
const TabArrow = styled.svg`width: 6px; height: 9px; fill: none; stroke: #000; margin-left: ${(p) => p.$ml}px;`;

/* ---------- right side ---------- */
const ProjectBar = styled.div`display: flex; align-items: center; height: 25px; flex: none; padding-left: 4px; background: ${bar};`;
const ProjectTree = styled.div`height: 252px; flex: none; background: #fff; overflow: hidden;`;
const ProjectRow = styled.div`display: flex; align-items: center; height: 20px; padding-left: ${(p) => p.$pl}px; background: ${(p) => (p.$root ? "#d9d9d9" : "#fff")};`;
const NotesFrame = styled.div`width: 87px; height: 257px; margin: 5px 0 0 4px; flex: none; background: #a0a0a0; border: 1px solid #999;`;
const NotesBar = styled.div`display: flex; align-items: center; height: 24px; padding-left: 8px; overflow: hidden; background: linear-gradient(180deg,#fff,#bbb);`;
const NotesPage = styled.div`width: 73px; height: 220px; margin: 6px 0 0 6px; background: #fff; border: 1px solid #444;`;

/* ---------- status and task bars ---------- */
const StatusBar = styled.div`display: flex; align-items: center; height: 24px; flex: none; background: #f0f0f0; border-top: 1px solid #d4d4d4; padding: 0 0 1px 5px;`;
const ZoomKnob = styled.svg`width: 15px; height: 15px; fill: none; stroke: #555; margin-left: ${(p) => p.$ml}px;`;
const SliderThumb = styled.i`width: 10px; height: 16px; margin-left: 2px; background: #cbcbcb; clip-path: polygon(0 0,100% 0,100% 70%,50% 100%,0 70%);`;
const SliderTrack = styled.i`width: 81px; height: 3px; border: 1px solid #d4d4d4;`;
const KeyBox = styled.div`display: flex; align-items: center; width: 185px; height: 14px; margin-left: 4px; border: 1px solid #aaa; border-radius: 2px; padding-left: 6px;`;
const TaskBar = styled.div`display: flex; align-items: center; height: 30px; flex: none; background: #000d18;`;
const TaskButton = styled.span`
  display: flex; align-items: center; justify-content: center; height: 30px; width: ${(p) => p.$w}px; margin-left: ${(p) => p.$ml || 0}px; padding-bottom: 2px;
  background: ${(p) => (p.$on ? "#31404c" : "none")}; box-shadow: ${(p) => (p.$open ? "inset 0 -2px #76b9ed" : "none")};
`;
const Tray = styled.div`display: flex; align-items: center; margin-left: auto; gap: 8px; height: 30px; padding-bottom: 1px;`;
const ShowDesktop = styled.i`width: 5px; height: 30px; border-left: 1px solid #5a636b; margin-left: 15px;`;

const menus = [["File", 18], ["Edit", 20], ["View", 25], ["Project", 35], ["Diagram", 43], ["Element", 41], ["Tools", 26], ["Analyzer", 43], ["Extensions", 55], ["Settings", 42], ["Window", 44], ["Help", 24]];

// [level, label, width, checked, expanded]
const sections = [
  [3, "Child Elements", 69, 1], [3, "Audit History", 62, 0, 1], [4, "Audit Item", 50], [3, "Inherited Attributes", 95],
  [3, "Inherited Methods", 88], [3, "Classifier Instances", 93], [3, "Business Rules", 70, 0, 1], [4, "Business Conditions", 94],
  [4, "Business Actions", 79], [4, "Business Computation", 105], [3, "Usage", 30, 0, 1], [4, "Attribute", 43], [4, "Method", 36],
  [4, "Parameter", 50], [4, "Diagram", 39], [2, "Connector", 50, 1, 1], [3, "Source", 33, 1, 1], [4, "Element", 38, 1],
  [4, "Linked Feature", 71], [4, "Tagged Value", 65], [3, "Target", 32, 1, 1], [4, "Element", 38, 1], [4, "Linked Feature", 71],
  [4, "Tagged Value", 65], [3, "Constraint", 50], [3, "Tagged Value", 65], [3, "Trigger", 34], [2, "Child Packages", 71, 1],
  [2, "Relationship Matrix", 91], [1, "Custom", 36],
];
const hasNext = (i, level) => {
  for (let j = i + 1; j < sections.length; j++) {
    if (sections[j][0] === level) return true;
    if (sections[j][0] < level) return false;
  }
  return false;
};

const tags = [["< diagram", 50], ["child packages >", 85], ["< child packages", 85], ["element >", 49], ["{Template - Requirement Details}", 167], ["embedded elements >", 111], ["< embedded elements", 111], ["diagram >", 50], ["< diagram", 50], ["child elements >", 83], ["< child elements", 83], ["< element", 49], ["< package", 52]];

function SectionTree() {
  return (
    <TreeBox>
      <TreeList>
        {sections.map(([level, label, w, on, open], i) => (
          <TreeRow key={i}>
            {Array.from({ length: level }, (_, k) => {
              const own = k + 1 === level;
              const next = hasNext(i, k + 1);
              return <Guide key={k} $v={next ? 16 : own ? 9 : 0} $branch={own}>{own && open ? <Box9 /> : null}</Guide>;
            })}
            <Check>{on ? <Stroke viewBox="0 0 11 11" $w={11} $h={11} $c="#444" $sw={1.500}><path d="M1.500 5l3 3 5-6" /></Stroke> : null}</Check>
            <Text w={w}>{label}</Text>
          </TreeRow>
        ))}
      </TreeList>
      <VScroll><Chevron d="up" /><Thumb $w={15} $h={107} $m="347px 0 4px" /><Chevron d="down" /></VScroll>
      <HScroll $wide><Chevron d="left" /><Thumb $w={158} $h={15} $m="0 11px 0 5px" /><Chevron d="right" /></HScroll>
    </TreeBox>
  );
}

function Editing() {
  const mark = "#c0c0c0";
  const grey = "#666";
  const T = (p) => <Text font={serif} size={13} {...p} />;
  return (
    <Page>
      <DocLine $h={15} $mt={-8}>
        {T({ w: 88, italic: true, bg: mark, children: "{Diagram.Type}" })}
        {T({ w: 47, ml: 2, italic: true, children: "diagram" })}
        {T({ w: 118, ml: 3, italic: true, bg: mark, children: "{Diagram.Stereotype}" })}
        {T({ w: 60, ml: 3, italic: true, children: "in package" })}
        {T({ w: 143, ml: 6, italic: true, bg: mark, children: "{Diagram.ParentPackage}" })}
      </DocLine>
      <DocLine $h={16} $mt={15}>{T({ w: 93, bg: mark, children: "{Diagram.Notes}" })}</DocLine>
      <DocLine $h={15} $mt={15} $at="flex-end">{T({ w: 94, bg: mark, color: grey, children: "{Diagram.Name}" })}</DocLine>
      <DocLine $h={16} $at="flex-end">
        {T({ w: 44, color: grey, children: "Version" })}
        {T({ w: 104, ml: 3, bg: mark, color: grey, children: "{Diagram.Version}" })}
      </DocLine>
      <DocLine $h={15} $at="flex-end">
        {T({ w: 100, bg: mark, color: grey, children: "{Diagram.Author}" })}
        {T({ w: 57, ml: 3, color: grey, children: "created on" })}
        {T({ w: 157, ml: 3, bg: mark, color: grey, children: "{Diagram.DateCreatedShort}" })}
        {T({ w: 84, ml: 1, color: grey, children: ".  Last modified" })}
        {T({ w: 167, ml: 3, bg: mark, color: grey, children: "{Diagram.DateModifiedShort}" })}
      </DocLine>
      <DocLine $h={16} $mt={15} $at="center">{T({ w: 130, bg: mark, children: "{Diagram.DiagramImg}" })}</DocLine>
      <DocLine $h={12} $mt={15} $at="center">
        {T({ w: 41, size: 11, children: "Figure 1:" })}
        {T({ w: 75, ml: 3, size: 11, bg: mark, children: "{Diagram.Name}" })}
      </DocLine>
      <Tags>
        {tags.map(([t, w], i) => (
          <Text key={i} w={w} size={10} font={sans} color={t[0] === "{" ? "#fff" : "#333"} bg={t[0] === "{" ? "#c04040" : "#ffff80"}>{t}</Text>
        ))}
      </Tags>
    </Page>
  );
}

export default function App() {
  return (
    <>
      <Global />
      <Screen>
        <TitleBar>
          <Icon n="knot" /><Text w={296} ml={5} size={12}>309_Stravovacie_zariadenie-projekt - Enterprise Architect</Text>
          <WinButtons>
            <svg viewBox="0 0 11 11"><path d="M0 5.500h10" /></svg>
            <svg viewBox="0 0 11 11"><path d="M.5 2.500h7v7h-7zM2.500 2V.5h7v7H8" /></svg>
            <svg viewBox="0 0 11 11"><path d="M.5.5l10 10M10.500.5l-10 10" /></svg>
          </WinButtons>
        </TitleBar>
        <MenuBar>
          <Grip $ml={0} />
          {menus.map(([m, w], i) => <Text key={m} w={w} ml={i ? 0 : -4}>{m}</Text>)}
        </MenuBar>
        <ToolRow>
          <ToolBar $w={533}>
            <Grip $ml={4} /><Icon n="newdoc" ml={6} /><Icon n="open" ml={10} /><Tri $ml={4} /><Icon n="save" ml={6} s={15} /><Sep $ml={8} />
            <Icon n="cut" ml={6} /><Icon n="copy" ml={6} s={15} /><Icon n="paste" ml={8} /><Icon n="undo" ml={6} s={15} /><Icon n="redo" ml={8} s={14} /><Sep $ml={7} />
            <Icon n="preview" ml={7} /><Icon n="page" ml={6} /><Icon n="print" ml={6} /><Sep $ml={8} /><Icon n="find" ml={5} /><Icon n="find2" ml={7} /><Sep $ml={6} />
            <Select w={144} ml={5} text="<default>" tw={51} /><Sep $ml={7} /><Icon n="help" ml={5} /><Overflow $ml={7}><Tri /></Overflow>
          </ToolBar>
          <ToolBar $w={207}>
            <Grip $ml={5} /><Icon n="newel" ml={6} /><Icon n="shade" ml={7} s={15} /><Icon n="doc" ml={7} /><Icon n="bigA" ml={6} /><Icon n="docT" ml={6} /><Icon n="legend" ml={6} /><Sep $ml={7} />
            <Icon n="globe" ml={6} /><Icon n="dash" ml={7} s={15} /><Overflow $ml={6}><Tri /></Overflow>
          </ToolBar>
          <ToolBar $w={217}>
            <Grip $ml={5} /><Icon n="gridSave" ml={7} /><Icon n="gridHand" ml={6} /><Select w={145} ml={5} text="Basic - Normal" tw={73} /><Overflow $ml={6}><Tri /></Overflow>
          </ToolBar>
        </ToolRow>

        <Work>
          <Rail $w={23}>
            <RailTab $h={113} $gap={3}><Icon n="book" s={14} /><Text vertical w={89} size={12} font={sans} color="#777">Learning Center</Text></RailTab>
            <RailTab $h={98} $mt={14} $gap={0}><Icon n="team" s={16} /><Text vertical w={75} size={12} font={sans} color="#777">Team Review</Text></RailTab>
          </Rail>
          <SideCol $w={92} $mr={4}>
            <PanelCaption text="Tool..." w={30} />
            <ToolboxBody>
              <MoreTools><Text w={58}>More tools...</Text></MoreTools>
              <GroupHead $mt={1}><Box9 /><Text bold w={46}>Use Case</Text></GroupHead>
              <Row $h={6} />
              {[["actor", "Actor"], ["usecase", "Use Case"], ["testcase", "Test Case"], ["collab", "Collaboration"], ["collab", "Collaboration"], ["boundary", "Boundary"], ["pkg", "Package"]].map(([n, t], i) => (
                <ToolItem key={i}><Icon n={n} /><Text w={[27, 46, 48, 71, 71, 53, 45][i]}>{t}</Text></ToolItem>
              ))}
              {[["Use Case R...", 65], ["Use Case P...", 63], ["Common", 48], ["Artifacts", 43]].map(([t, w], i) => (
                <GroupHead key={t} $mt={i ? 3 : 5}><Box9 $plus /><Text bold w={w}>{t}</Text></GroupHead>
              ))}
            </ToolboxBody>
            <Row $h={4} />
            <PanelCaption text="Pan ..." w={31} />
            <PanBody>
              <PanBar><Icon n="zin" /><Icon n="zout" /><Icon n="zfit" /><Icon n="zwin" /></PanBar>
              <PanView />
            </PanBody>
            <BottomTabs $pl={3}>
              <SmallTab $on $w={27}><Icon n="lens" s={15} /><Text size={11} color="#800020" ml={2}>P</Text></SmallTab>
              <SmallTab $line $w={29}><Icon n="tree" s={15} /><Text size={11} color="#666" ml={2}>L</Text></SmallTab>
              <SmallTab $w={27}><Icon n="diagLens" s={15} /><Text size={11} color="#666" ml={2}>D</Text></SmallTab>
            </BottomTabs>
            <MailTab><Icon n="mail" s={14} /><Text w={57} color="#777">Model Mail</Text></MailTab>
          </SideCol>

          <DocWindow>
            <DocHead>
              <Icon n="docGreen" /><Text w={118} ml={26} color="#666">Template : moja_sablona</Text>
              <Grow />
              <HeadButton $ml={0}><Stroke viewBox="0 0 10 10" $w={10} $h={10} $c="#888" $sw={1.200}><path d="M1 5l4-4 4 4M1 9l4-4 4 4" /></Stroke></HeadButton>
              <HeadButton $ml={13}><Tri $s={4} /></HeadButton>
              <HeadButton $ml={5}><Stroke viewBox="0 0 8 8" $w={8} $h={8} $c="#000" $sw={2}><path d="M1 1l6 6M7 1L1 7" /></Stroke></HeadButton>
              <Row $pl={3} />
            </DocHead>
            <DocBar>
              <Icon n="newdoc" ml={4} /><Sep $ml={8} /><Icon n="tplSave" ml={7} s={14} /><Icon n="tplSaveAll" ml={7} /><Sep $ml={7} />
              <Icon n="wiz" ml={6} /><Icon n="diskLens" ml={6} /><Toggled><Icon n="layout" /></Toggled><Sep $ml={4} />
              <Select w={145} ml={6} text="Model Templates" tw={82} h={18} pl={2} />
              <Select w={244} ml={5} text="moja_sablona" tw={65} h={18} pl={4} /><Sep $ml={7} />
              <Combo $w={294} $ml={6} $h={18}><Text w={113}>Stravovacie zariadenie</Text></Combo>
              <Text ml={8} w={12} bold>...</Text><Icon n="generate" ml={8} /><Icon n="glasses" ml={6} />
            </DocBar>
            <Columns>
              <SectionsCol>
                <Row $h={37}><Heading><Text w={41}>Sections</Text></Heading><HandButton $ml={125}><Icon n="handUp" /></HandButton><HandButton $ml={6}><Icon n="handDown" /></HandButton></Row>
                <SectionTree />
              </SectionsCol>
              <ContentCol>
                <Row $h={37}><Heading><Text w={37}>Content</Text></Heading></Row>
                <DocBar>
                  <Icon n="blank" ml={5} s={15} /><Icon n="save2" ml={8} s={14} /><Icon n="print2" ml={7} /><Icon n="prev2" ml={6} /><Sep $ml={6} />
                  <Icon n="cut2" ml={7} /><Icon n="copy2" ml={6} /><Icon n="paste2" ml={6} /><Sep $ml={7} /><Icon n="undo2" ml={7} s={14} /><Icon n="redo2" ml={8} s={14} /><Sep $ml={8} />
                  <Icon n="binoc" ml={6} /><Sep $ml={8} /><Icon n="cal" ml={7} /><Icon n="page1" ml={6} s={15} /><Icon n="page2" ml={7} s={15} /><Icon n="para" ml={6} s={14} /><Sep $ml={8} />
                  <Icon n="help" ml={7} /><Select w={74} ml={5} text="100%" tw={27} pl={2} />
                </DocBar>
                <DocBar>
                  <Select w={144} ml={5} text="Normal" tw={34} pl={2} h={18} /><Select w={144} ml={6} text="Times New Roman" tw={90} pl={3} h={18} /><Select w={54} ml={6} text="10" tw={13} pl={2} h={18} />
                  <Text font={serif} bold size={15} ml={9}>B</Text><Text font={serif} bold italic size={15} ml={14}>I</Text>
                  <Underline><Text font={serif} bold size={13}>U</Text></Underline><Icon n="fontA" ml={9} /><Sep $ml={8} />
                  <Icon n="alL" ml={6} /><Icon n="alC" ml={6} /><Icon n="alR" ml={6} /><Icon n="alJ" ml={6} /><Sep $ml={7} />
                  <Tri $ml={8} /><Icon n="bullets" ml={6} /><Icon n="indent" ml={6} /><Icon n="outdent" ml={6} />
                </DocBar>
                <Editor>
                  <Canvas><Gutter $w={24} $r={1} /><Editing /><Gutter $w={24} $l={3} /></Canvas>
                  <VScroll $pad="4px 1px 4px 0"><Chevron d="up" /><Thumb $w={15} $h={26} $m="381px 0 10px" /><Chevron d="down" /></VScroll>
                </Editor>
                <HScroll><Chevron d="left" c="#bbb" /><Grow /><Chevron d="right" c="#bbb" /><Row $pl={16} /></HScroll>
              </ContentCol>
            </Columns>
            <DocTabs>
              <TabArrow viewBox="0 0 6 9" $ml={5}><path d="M5 .5v8l-4-4z" /></TabArrow>
              <SlantLine viewBox="0 0 20 21" $ml={6}><path d="M0 0l20 21" /></SlantLine>
              <DocTab $w={103} $ml={0} $pl={28} $slant><Icon n="knot" /><Text w={52} ml={8}>Start Page</Text></DocTab>
              <SlantLine viewBox="0 0 20 21" $ml={-8}><path d="M0 0l20 21" /></SlantLine>
              <DocTab $on $w={136} $ml={0} $pl={28} $slant><Icon n="docGreen" s={16} /><Text bold w={78} ml={8}>*moja_sablona</Text></DocTab>
              <DocTab $edge $w={147} $ml={-1} $pl={10}><Icon n="docRed" s={15} /><Text w={104} ml={9}>Requirement Details</Text></DocTab>
              <Grow />
              <TabArrow viewBox="0 0 6 9" $ml={0}><path d="M1 .5v8l4-4z" /></TabArrow><Row $pl={12} />
            </DocTabs>
          </DocWindow>

          <SideCol $w={95} $mr={2}>
            <PanelCaption text="Proje..." w={34} />
            <ProjectBar><Icon n="prNew" /><Icon n="prFolder" ml={6} /><Icon n="prDiag" ml={6} /><Icon n="prEl" ml={6} /></ProjectBar>
            <ProjectTree>
              <ProjectRow $root $pl={8}><Chevron d="down" c="#333" /><Icon n="cabinet" ml={9} s={16} /><Text w={93} ml={5}>Stravovacie zariad</Text></ProjectRow>
              {[["pBox", "Biznis procesy", 75], ["pOval", "Zber požiad", 59], ["pList", "Analýza", 40], ["pBox", "implement", 56], ["pCube", "nasadenie", 52]].map(([n, t, w]) => (
                <ProjectRow key={t} $pl={25}><Chevron d="right" c="#999" /><Icon n={n} ml={11} s={15} /><Text w={w} ml={6}>{t}</Text></ProjectRow>
              ))}
            </ProjectTree>
            <HScroll $h={15}><Chevron d="left" /><Thumb $w={34} $h={15} $m="0 0 0 5px" /><Grow /><Chevron d="right" /></HScroll>
            <Row $h={5} />
            <PanelCaption text="Notes" w={30} />
            <NotesFrame>
              <NotesBar>
                <Text font={serif} bold size={16} color="#888">B</Text><Text font={serif} italic size={16} color="#888" ml={13}>I</Text>
                <Underline $c="#888"><Text font={serif} size={15} color="#888">U</Text></Underline><Icon n="fontA" ml={8} s={15} />
              </NotesBar>
              <NotesPage />
            </NotesFrame>
            <Row $h={2} />
            <BottomTabs $pl={2}>
              <SmallTab $on $w={29}><Icon n="noteRed" s={15} /><Text size={11} color="#204080" ml={1}>N</Text></SmallTab>
              <SmallTab $line $w={30}><Icon n="wiz" /><Text size={11} color="#666" ml={1}>P</Text></SmallTab>
              <SmallTab $w={30}><Icon n="tag" s={14} /><Text size={11} color="#666" ml={2}>T</Text></SmallTab>
            </BottomTabs>
          </SideCol>
          <Rail $w={21}>
            <RailTab $right $h={94} $gap={1}><Icon n="folderLens" /><Text vertical w={71} size={12} font={sans} color="#666">Model Views</Text></RailTab>
            <RailTab $right $h={116} $mt={14} $gap={2}><Icon n="listLens" s={15} /><Text vertical w={93} size={12} font={sans} color="#666">Element Browser</Text></RailTab>
          </Rail>
        </Work>

        <StatusBar>
          <Text w={49}>Diagram::</Text><Text w={143} ml={9}>created: 01.11.2015 12:05:34</Text><Text w={151} ml={6}>modified: 01.11.2015 12:05:34</Text>
          <Text w={27} ml={9}>100%</Text><Text w={53} ml={9}>827 x 1169</Text>
          <Grow />
          <ZoomKnob viewBox="0 0 15 15" $ml={0}><circle cx="7.500" cy="7.500" r="6.500" /><path d="M4 7.500h7" /></ZoomKnob>
          <SliderThumb /><SliderTrack />
          <ZoomKnob viewBox="0 0 15 15" $ml={8}><circle cx="7.500" cy="7.500" r="6.500" /><path d="M4 7.500h7M7.500 4v7" /></ZoomKnob>
          <KeyBox><Text w={20} color="#666">CAP</Text><Text w={26} ml={19}>NUM</Text><Text w={25} ml={20} color="#666">SCRL</Text><Text w={37} ml={20} color="#666">CLOUD</Text></KeyBox>
          <Row $pl={1} />
        </StatusBar>
        <TaskBar>
          <TaskButton $w={36}><Icon n="windows" /></TaskButton><TaskButton $w={36}><Icon n="taskview" /></TaskButton>
          <TaskButton $w={37} $ml={1}><Icon n="edge" /></TaskButton><TaskButton $w={37}><Icon n="opera" /></TaskButton>
          <TaskButton $w={37}><Icon n="firefox" /></TaskButton><TaskButton $w={37}><Icon n="chrome" /></TaskButton>
          <TaskButton $w={36} $ml={1} $on $open><Icon n="knot" /></TaskButton><TaskButton $w={28} $ml={5} $open><Icon n="explorer" /></TaskButton>
          <Tray>
            {["tWeather", "tSteel", "tCompass", "tTorrent", "tBlue", "tUsb", "tPower", "tWifi", "tSound", "tNote"].map((n) => <Icon key={n} n={n} />)}
            <Text w={20} ml={4} color="#fff">SLK</Text><Text w={27} ml={25} color="#fff">12:09</Text><ShowDesktop />
          </Tray>
        </TaskBar>
      </Screen>
    </>
  );
}
